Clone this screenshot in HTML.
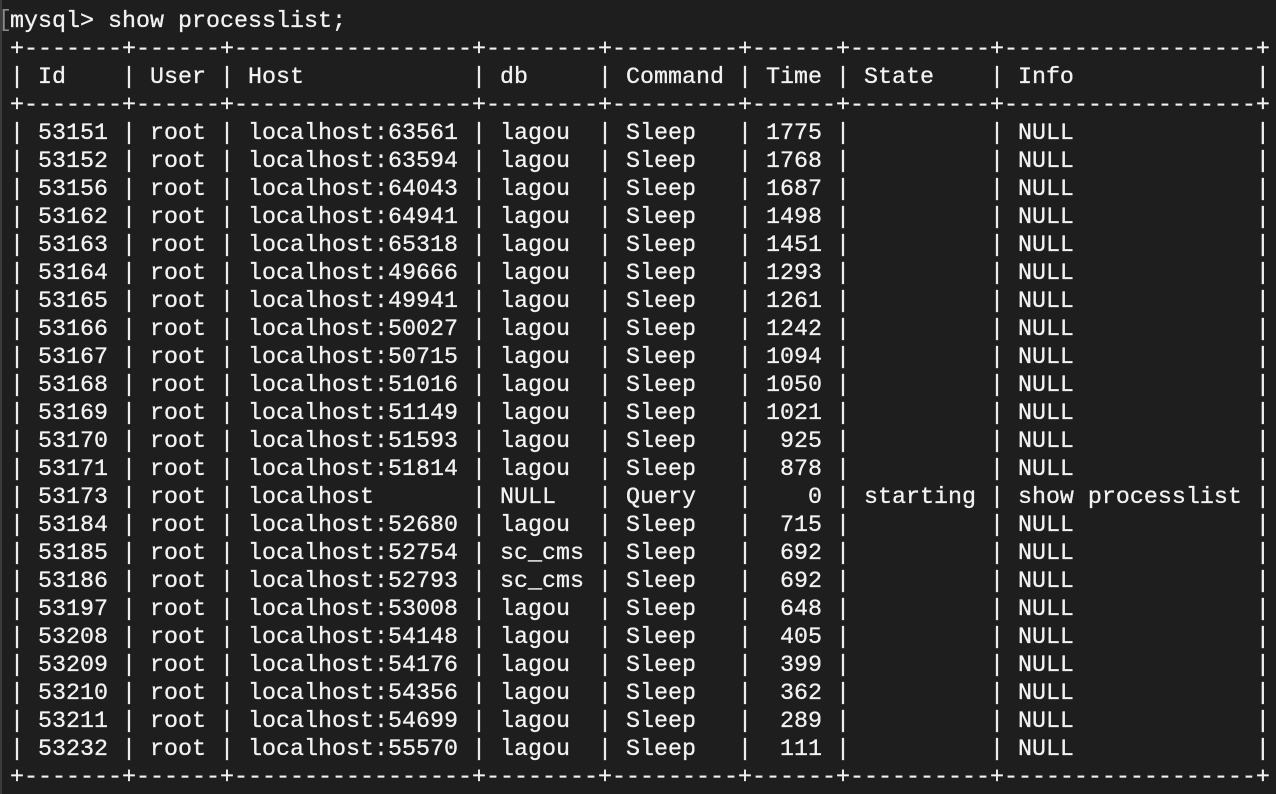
<!DOCTYPE html>
<html><head><meta charset="utf-8"><style>
html,body{margin:0;padding:0;width:1276px;height:794px;overflow:hidden;background:#1e1e1e}
.s{position:absolute;left:0;top:0;width:2px;height:794px;background:#3c3c3c}
pre{position:absolute;left:10px;top:8px;margin:0;font-family:"Liberation Mono",monospace;font-size:23.33px;line-height:28px;color:#f2f2f2;-webkit-text-stroke:.3px #f2f2f2}
.b{position:absolute;left:-12px;top:-1px;color:#8a8a8a;-webkit-text-stroke:0}
</style></head><body>
<div class="s"></div>
<pre><span class="b">[</span>mysql&gt; show processlist;
+-------+------+-----------------+--------+---------+------+----------+------------------+
| Id    | User | Host            | db     | Command | Time | State    | Info             |
+-------+------+-----------------+--------+---------+------+----------+------------------+
| 53151 | root | localhost:63561 | lagou  | Sleep   | 1775 |          | NULL             |
| 53152 | root | localhost:63594 | lagou  | Sleep   | 1768 |          | NULL             |
| 53156 | root | localhost:64043 | lagou  | Sleep   | 1687 |          | NULL             |
| 53162 | root | localhost:64941 | lagou  | Sleep   | 1498 |          | NULL             |
| 53163 | root | localhost:65318 | lagou  | Sleep   | 1451 |          | NULL             |
| 53164 | root | localhost:49666 | lagou  | Sleep   | 1293 |          | NULL             |
| 53165 | root | localhost:49941 | lagou  | Sleep   | 1261 |          | NULL             |
| 53166 | root | localhost:50027 | lagou  | Sleep   | 1242 |          | NULL             |
| 53167 | root | localhost:50715 | lagou  | Sleep   | 1094 |          | NULL             |
| 53168 | root | localhost:51016 | lagou  | Sleep   | 1050 |          | NULL             |
| 53169 | root | localhost:51149 | lagou  | Sleep   | 1021 |          | NULL             |
| 53170 | root | localhost:51593 | lagou  | Sleep   |  925 |          | NULL             |
| 53171 | root | localhost:51814 | lagou  | Sleep   |  878 |          | NULL             |
| 53173 | root | localhost       | NULL   | Query   |    0 | starting | show processlist |
| 53184 | root | localhost:52680 | lagou  | Sleep   |  715 |          | NULL             |
| 53185 | root | localhost:52754 | sc_cms | Sleep   |  692 |          | NULL             |
| 53186 | root | localhost:52793 | sc_cms | Sleep   |  692 |          | NULL             |
| 53197 | root | localhost:53008 | lagou  | Sleep   |  648 |          | NULL             |
| 53208 | root | localhost:54148 | lagou  | Sleep   |  405 |          | NULL             |
| 53209 | root | localhost:54176 | lagou  | Sleep   |  399 |          | NULL             |
| 53210 | root | localhost:54356 | lagou  | Sleep   |  362 |          | NULL             |
| 53211 | root | localhost:54699 | lagou  | Sleep   |  289 |          | NULL             |
| 53232 | root | localhost:55570 | lagou  | Sleep   |  111 |          | NULL             |
+-------+------+-----------------+--------+---------+------+----------+------------------+</pre>
</body></html>
